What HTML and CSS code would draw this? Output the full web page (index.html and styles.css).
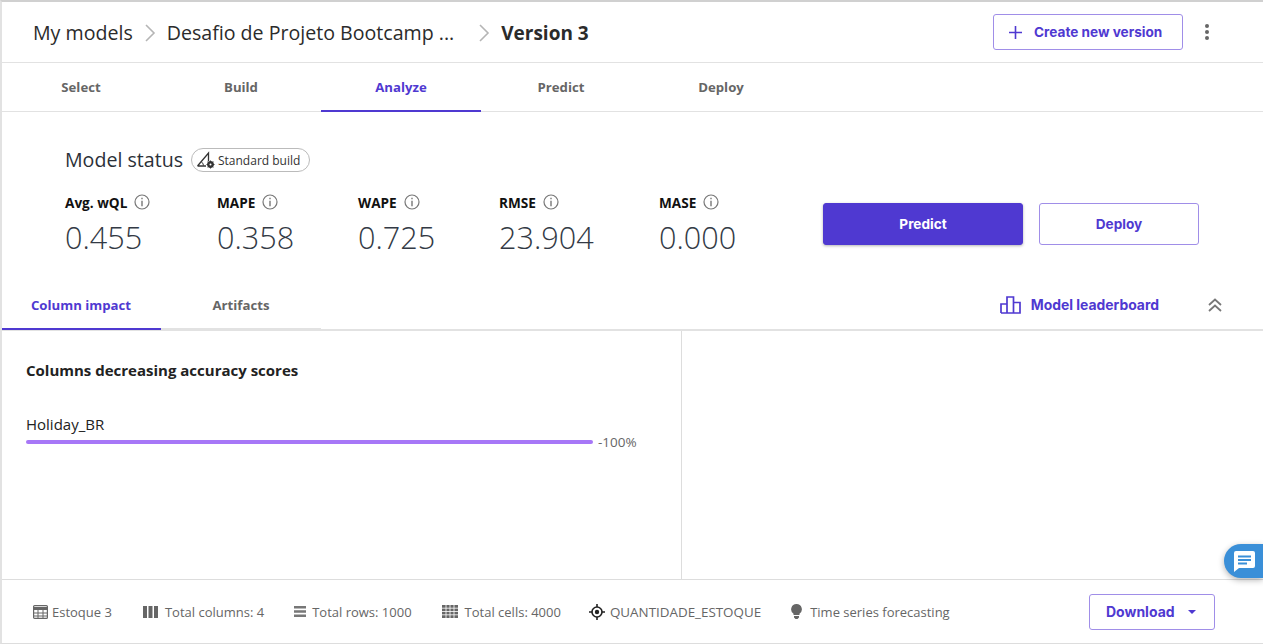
FILE: index.html
```html
<!DOCTYPE html>
<html>
<head>
    <title>Version 3 - Analyze</title>
    <link rel="stylesheet" href="styles.css">
</head>
<body>
<div class="page">
    <div class="header">
        <div class="crumbs">
            <span>My models</span>
            <svg class="chev" width="12" height="18" viewBox="0 0 12 18"><path d="M2 1l8 8-8 8" fill="none" stroke="#b5b5b5" stroke-width="1.6"/></svg>
            <span>Desafio de Projeto Bootcamp ...</span>
            <svg class="chev chev-wide" width="12" height="18" viewBox="0 0 12 18"><path d="M2 1l8 8-8 8" fill="none" stroke="#b5b5b5" stroke-width="1.6"/></svg>
            <strong>Version 3</strong>
        </div>
        <button class="btn btn-create">
            <svg width="13" height="13" viewBox="0 0 13 13"><path d="M6.5 0v13M0 6.5h13" stroke="#4f39d1" stroke-width="1.6"/></svg>
            Create new version
        </button>
        <svg class="kebab" width="6" height="18" viewBox="0 0 6 18"><circle cx="3" cy="3" r="2" fill="#666"/><circle cx="3" cy="9" r="2" fill="#666"/><circle cx="3" cy="15" r="2" fill="#666"/></svg>
    </div>

    <div class="tabs main-tabs">
        <div class="tab">Select</div>
        <div class="tab">Build</div>
        <div class="tab active">Analyze</div>
        <div class="tab">Predict</div>
        <div class="tab">Deploy</div>
    </div>

    <div class="status">
        <div class="status-title">
            <h2>Model status</h2>
            <span class="pill">
                <svg width="20" height="18" viewBox="0 0 20 18"><path d="M1.500 15L12.500 2v8M1.500 15H10" fill="none" stroke="#333" stroke-width="1.300"/><path d="M5 10.500a5 5 0 0 1 2.500 4" fill="none" stroke="#333" stroke-width="1"/><circle cx="14.500" cy="13.500" r="2.400" fill="none" stroke="#333" stroke-width="2"/><path d="M14.500 9.500v8M10.500 13.500h8M11.700 10.700l5.600 5.600M17.300 10.700l-5.600 5.600" stroke="#333" stroke-width="1"/><circle cx="14.500" cy="13.500" r="1" fill="#fff"/></svg>
                Standard build
            </span>
        </div>
        <div class="status-row">
            <div class="metrics">
                <div class="metric m1">
                    <div class="metric-name">Avg. wQL <svg class="info" width="16" height="16" viewBox="0 0 16 16"><use href="#i-info"/></svg></div>
                    <div class="metric-value">0.455</div>
                </div>
                <div class="metric m2">
                    <div class="metric-name">MAPE <svg class="info" width="16" height="16" viewBox="0 0 16 16"><use href="#i-info"/></svg></div>
                    <div class="metric-value">0.358</div>
                </div>
                <div class="metric m3">
                    <div class="metric-name">WAPE <svg class="info" width="16" height="16" viewBox="0 0 16 16"><use href="#i-info"/></svg></div>
                    <div class="metric-value">0.725</div>
                </div>
                <div class="metric m4">
                    <div class="metric-name">RMSE <svg class="info" width="16" height="16" viewBox="0 0 16 16"><use href="#i-info"/></svg></div>
                    <div class="metric-value">23.904</div>
                </div>
                <div class="metric m5">
                    <div class="metric-name">MASE <svg class="info" width="16" height="16" viewBox="0 0 16 16"><use href="#i-info"/></svg></div>
                    <div class="metric-value">0.000</div>
                </div>
            </div>
            <div class="actions">
                <button class="btn btn-predict">Predict</button>
                <button class="btn btn-deploy">Deploy</button>
            </div>
        </div>
    </div>

    <div class="subbar">
        <div class="tabs sub-tabs">
            <div class="tab active">Column impact</div>
            <div class="tab">Artifacts</div>
        </div>
        <div class="subbar-right">
            <svg width="21" height="18" viewBox="0 0 21 18"><path d="M1 17V8h6v9M7 17V1h6.500v16M13.500 17V6.500H20V17H1z" fill="none" stroke="#4f39d1" stroke-width="1.700"/></svg>
            <span class="leaderboard">Model leaderboard</span>
            <svg class="collapse" width="14" height="14" viewBox="0 0 14 14"><path d="M1 7l6-5.500L13 7M1 13l6-5.500L13 13" fill="none" stroke="#777" stroke-width="1.800"/></svg>
        </div>
    </div>

    <div class="panels">
        <div class="panel panel-left">
            <h3>Columns decreasing accuracy scores</h3>
            <div class="bar-label">Holiday_BR</div>
            <div class="bar-row">
                <div class="bar"></div>
                <span class="bar-value">-100%</span>
            </div>
        </div>
        <div class="panel"></div>
    </div>

    <div class="footer">
        <div class="fact fact-first">
            <svg width="15" height="14" viewBox="0 0 15 14"><rect x=".6" y=".6" width="13.800" height="12.800" rx="1" fill="none" stroke="#666" stroke-width="1.200"/><path d="M1 3.500h13" stroke="#666" stroke-width="3"/><path d="M1 8h13M1 11h13M5 5v8M10 5v8" stroke="#666" stroke-width="1"/></svg>
            Estoque 3
        </div>
        <div class="fact">
            <svg width="15" height="12" viewBox="0 0 15 12"><path d="M0 0h4v12H0zM5.500 0h4v12h-4zM11 0h4v12h-4z" fill="#666"/></svg>
            Total columns: 4
        </div>
        <div class="fact fact-rows">
            <svg width="12" height="11" viewBox="0 0 12 11"><path d="M0 0h12v2.500H0zM0 4.200h12v2.500H0zM0 8.500h12V11H0z" fill="#777"/></svg>
            Total rows: 1000
        </div>
        <div class="fact fact-cells">
            <svg width="16" height="13" viewBox="0 0 16 13"><path d="M0 0h16v13H0z" fill="#666"/><path d="M4 0v13M8 0v13M12 0v13M0 3.200h16M0 6.500h16M0 9.800h16" stroke="#fff" stroke-width=".8"/></svg>
            Total cells: 4000
        </div>
        <div class="fact fact-target">
            <svg width="16" height="16" viewBox="0 0 16 16"><circle cx="8" cy="8" r="5" fill="none" stroke="#222" stroke-width="1.600"/><circle cx="8" cy="8" r="2.200" fill="#222"/><path d="M8 0v3M8 13v3M0 8h3M13 8h3" stroke="#222" stroke-width="1.600"/></svg>
            QUANTIDADE_ESTOQUE
        </div>
        <div class="fact fact-last">
            <svg width="11" height="15" viewBox="0 0 11 15"><path d="M5.500 0a5.300 5.300 0 0 1 3 9.700V11h-6V9.700a5.300 5.300 0 0 1 3-9.700zM3 12h5v1.500L6.500 15h-2L3 13.500z" fill="#666"/></svg>
            Time series forecasting
        </div>
        <button class="btn btn-download">Download <span class="caret"></span></button>
    </div>

    <div class="chat">
        <svg width="21" height="21" viewBox="0 0 21 21"><path d="M2 0h17a2 2 0 0 1 2 2v13a2 2 0 0 1-2 2H5l-5 4V2a2 2 0 0 1 2-2z" fill="#fff"/><path d="M4 4.500h13v2H4zM4 8h13v2H4zM4 11.500h9v2H4z" fill="#3a8fd8"/></svg>
    </div>

    <svg class="defs" width="0" height="0">
        <symbol id="i-info" viewBox="0 0 16 16">
            <circle cx="8" cy="8" r="7" fill="none" stroke="#777" stroke-width="1.200"/>
            <path d="M7.300 3.800h1.400v1.500H7.300zM7.300 6.700h1.400v5.500H7.300z" fill="#777"/>
        </symbol>
    </svg>
</div>
</body>
</html>
```

FILE: styles.css
```css
* { box-sizing: border-box; }
html, body { margin: 0; padding: 0; background: #fff; }
body { font-family: "Open Sans", "Noto Sans", sans-serif; color: #222; overflow: hidden; }

.page { position: relative; width: 1263px; height: 644px; border-top: 2px solid #d0d0d0; border-left: 2px solid #e2e2e2; border-bottom: 1px solid #ddd; display: flex; flex-direction: column; }
.defs { position: absolute; }

.btn { font-family: "Inter", sans-serif; font-weight: 700; font-size: 13.600px; border-radius: 3px; background: #fff; color: #4f39d1; border: 1px solid #a08ee8; cursor: pointer; padding: 0; }

.header { height: 61px; border-bottom: 1px solid #e2e2e2; display: flex; align-items: center; padding: 0 0 0 31px; flex: none; }
.crumbs { flex: 1; display: flex; align-items: center; font-size: 19.600px; color: #2b2b2b; }
.crumbs strong { font-weight: 700; font-size: 19px; margin-top: 1px; }
.chev { margin: 2px 11px 0 11px; }
.chev-wide { margin: 2px 11px 0 24px; }
.btn-create { width: 190px; height: 36px; display: flex; align-items: center; gap: 12px; padding-left: 15px; }
.kebab { margin: 0 53px 0 21px; }

.tabs { display: flex; flex: none; }
.tab { width: 160px; font-family: "Open Sans", sans-serif; font-weight: 700; font-size: 13.200px; color: #666; text-align: center; }
.tab.active { color: #4f39d1; }

.main-tabs { height: 49px; border-bottom: 1px solid #e2e2e2; }
.main-tabs .tab { line-height: 48px; position: relative; left: -1px; }
.main-tabs .tab.active { height: 49px; border-bottom: 2px solid #4f39d1; }

.status { height: 178px; padding: 36px 64px 0 63px; flex: none; }
.status-title { display: flex; align-items: center; height: 24px; }
.status-title h2 { margin: 0; padding-bottom: 2px; font-size: 19.600px; font-weight: 400; color: #2b3038; }
.pill { margin-left: 8px; height: 24px; width: 119px; border: 1px solid #bbb; border-radius: 12px; font-size: 12px; color: #333; display: flex; align-items: center; gap: 2px; padding-left: 4px; white-space: nowrap; }
.status-row { display: flex; justify-content: space-between; margin-top: 20px; }
.metrics { display: flex; }
.metric-name { font-size: 13.600px; font-weight: 700; color: #111; display: flex; align-items: center; gap: 7px; height: 20px; white-space: nowrap; }
.metric-value { font-size: 30.600px; font-weight: 300; color: #333a45; line-height: 44px; margin-top: 3px; }
.m1 { width: 152px; }
.m2 { width: 141px; }
.m3 { width: 141px; }
.m4 { width: 160px; }
.m5 { width: 120px; }

.actions { display: flex; gap: 16px; margin-top: 11px; }
.btn-predict { width: 200px; height: 42px; background: #4f39d1; color: #fff; border-color: #4f39d1; box-shadow: 0 1px 3px rgba(0,0,0,.3); }
.btn-deploy { width: 160px; height: 42px; }

.subbar { height: 41px; display: flex; justify-content: space-between; align-items: flex-start; border-bottom: 2px solid #e2e2e2; flex: none; }
.sub-tabs { height: 40px; }
.sub-tabs .tab { line-height: 30px; height: 40px; border-bottom: 2px solid #e2e2e2; width: 160px; }
.sub-tabs .tab:first-child { width: 159px; padding-right: 1px; }
.sub-tabs .tab.active { border-bottom-color: #4f39d1; }
.subbar-right { display: flex; align-items: center; height: 30px; }
.leaderboard { font-family: "Inter", sans-serif; font-weight: 700; font-size: 13.900px; color: #4f39d1; margin-left: 10px; }
.collapse { margin: 0 41px 0 49px; }

.panels { flex: 1; display: flex; min-height: 0; }
.panel { flex: 1; }
.panel-left { flex: none; width: 680px; border-right: 1px solid #ddd; padding: 28px 0 0 24px; }
.panel-left h3 { margin: 0; font-size: 15px; font-weight: 700; color: #222; line-height: 22px; }
.bar-label { margin-top: 33px; font-size: 15px; color: #222; line-height: 20px; }
.bar-row { display: flex; align-items: center; height: 16px; }
.bar { width: 567px; height: 4px; background: #a777f7; border-radius: 2px; }
.bar-value { margin-left: 5px; font-size: 13.500px; color: #666; }

.footer { height: 64px; border-top: 1px solid #ddd; display: flex; align-items: center; padding: 0 0 0 31px; flex: none; position: relative; }
.fact { display: flex; align-items: center; gap: 7px; font-size: 13px; color: #666; margin-right: 30px; white-space: nowrap; }
.fact-first { gap: 4px; margin-right: 31px; }
.fact-rows { gap: 6px; }
.fact-cells { margin-right: 28px; }
.fact-target { gap: 5px; font-size: 13.400px; margin-right: 30px; }
.fact-last { gap: 8px; }
.btn-download { position: absolute; left: 1087px; top: 14px; width: 126px; height: 36px; display: flex; align-items: center; gap: 13px; padding: 0 0 2px 16px; font-size: 14px; }
.caret { width: 0; height: 0; margin-top: 2px; border-left: 4.500px solid transparent; border-right: 4.500px solid transparent; border-top: 4.500px solid #4f39d1; }

.chat { position: absolute; left: 1222px; top: 542px; width: 39px; height: 34px; background: #3a8fd8; border-radius: 17px 0 0 17px; box-shadow: 0 2px 6px rgba(0,0,0,.3); display: flex; align-items: center; padding-left: 10px; }
```
